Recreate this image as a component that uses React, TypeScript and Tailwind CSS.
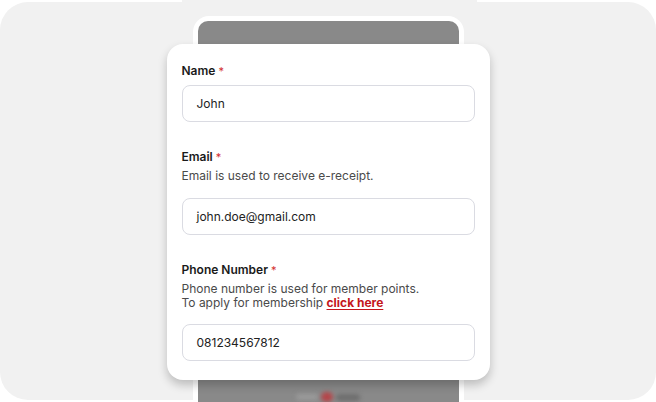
export default function App() {
  return (
    <div className="h-[402px] w-[656px] overflow-hidden bg-white font-['Inter',sans-serif]">
      {/* top notch strip */}
      <div className="flex h-[2px]">
        <div className="ml-[182px] w-[295px] bg-[#f1f1f1]" />
      </div>

      {/* grey stage */}
      <div className="h-[398px] rounded-[28px] bg-[#f1f1f1] pt-[14px]">
        {/* phone */}
        <div className="mx-auto h-[400px] w-[271px] rounded-[16px] bg-white px-[5px] pt-[5px]">
          <div className="flex h-full flex-col rounded-t-[10px] bg-[#898989] pt-[23px]">
            {/* form card */}
            <div className="-mx-[31px] rounded-[16px] bg-white px-[15px] pb-[19px] pt-[19px] shadow-[0_5px_10px_rgba(0,0,0,0.22)]">
              <Label text="Name" />
              <Field value="John" className="mt-[6px]" />

              <div className="mt-[27px]">
                <Label text="Email" />
                <p className="mt-1 text-[12px] leading-[14px] text-[#4a4a4a]">
                  Email is used to receive e-receipt.
                </p>
                <Field value="john.doe@gmail.com" className="mt-[15px]" />
              </div>

              <div className="mt-[27px]">
                <Label text="Phone Number" />
                <p className="mt-1 text-[12px] leading-[14px] text-[#4a4a4a]">
                  Phone number is used for member points.
                  <br />
                  To apply for membership{" "}
                  <a className="font-bold text-[#c4161c] underline underline-offset-2">click here</a>
                </p>
                <Field value="081234567812" className="mt-[14px]" />
              </div>
            </div>

            {/* blurred content behind */}
            <div className="mt-[12px] flex items-center justify-center gap-[3px] blur-[2px]">
              <div className="h-[6px] w-[22px] rounded bg-[#9a9a9a]" />
              <div className="h-[10px] w-[12px] rounded-full bg-[#b4464a]" />
              <div className="h-[7px] w-[24px] rounded bg-[#6e6e6e]" />
            </div>
          </div>
        </div>
      </div>
    </div>
  );
}

function Label({ text }: { text: string }) {
  return (
    <div className="text-[12px] font-semibold leading-4 text-[#1a1a1a]">
      {text} <span className="text-[11px] font-normal text-[#d32f2f]">*</span>
    </div>
  );
}

function Field({ value, className = "" }: { value: string; className?: string }) {
  return (
    <div
      className={
        "flex h-[37px] items-center rounded-[8px] border border-[#dadbe2] px-[14px] text-[12px] leading-4 text-[#222] " +
        className
      }
    >
      {value}
    </div>
  );
}
